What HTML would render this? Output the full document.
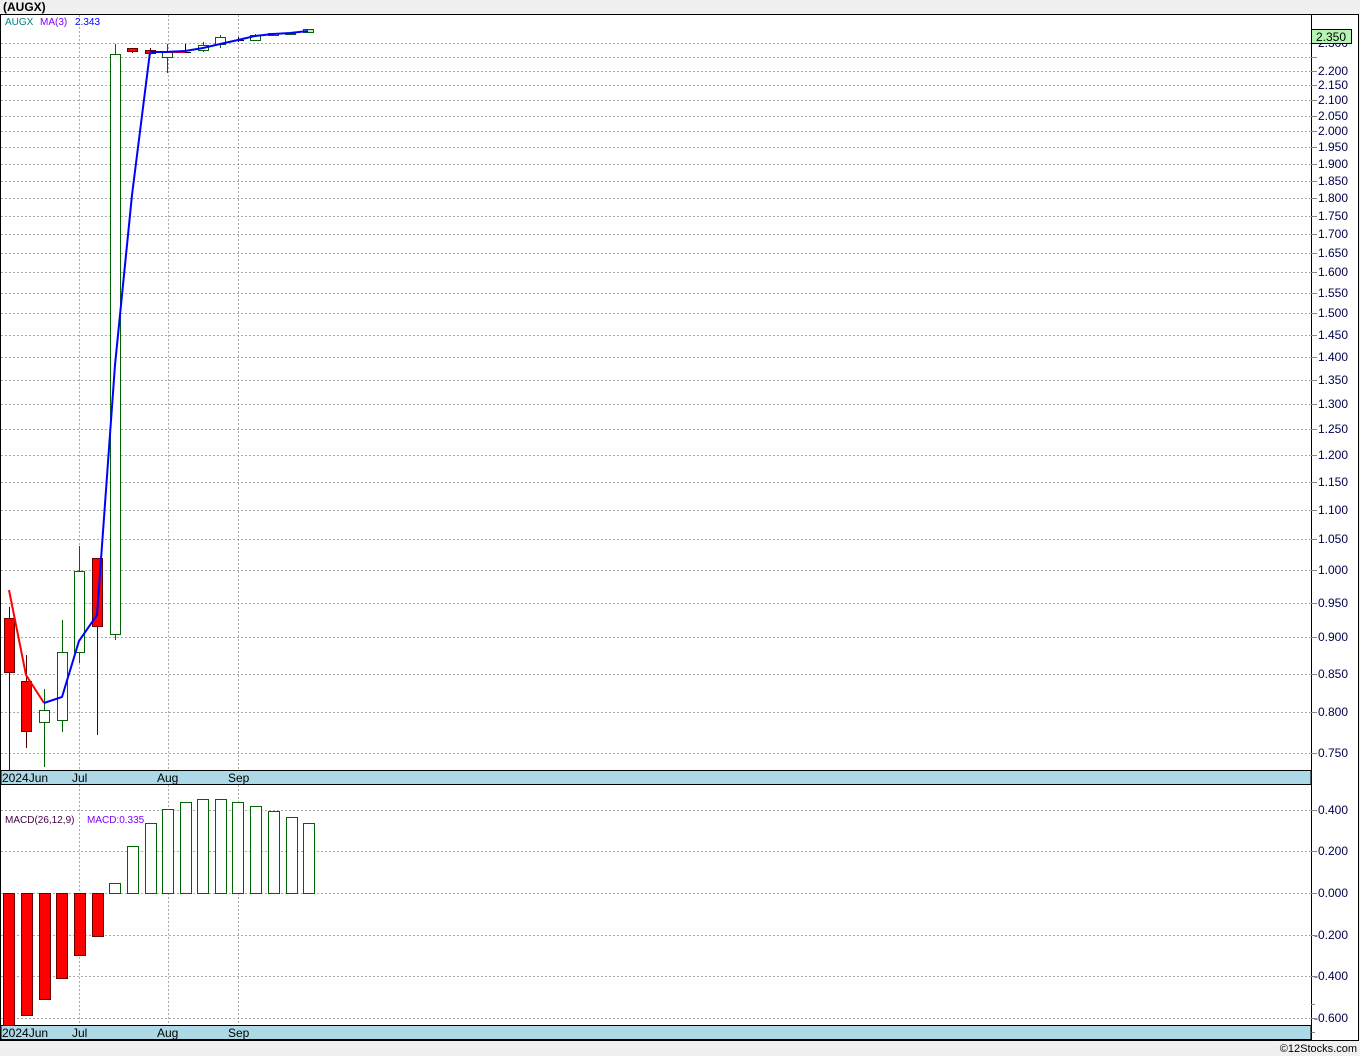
<!DOCTYPE html>
<html><head><meta charset="utf-8"><style>
html,body{margin:0;padding:0;background:#f0f0f0;width:1360px;height:1056px;overflow:hidden}
svg{display:block;font-family:"Liberation Sans",Tahoma,sans-serif}
</style></head><body>
<svg width="1360" height="1056" xmlns="http://www.w3.org/2000/svg">
<text x="3" y="11" font-size="12" font-weight="bold" fill="#000">(AUGX)</text>
<rect x="0.5" y="14.5" width="1358" height="1026" fill="#fff" stroke="#000"/>
<line x1="1311.5" y1="14" x2="1311.5" y2="1040" stroke="#000"/>
<g stroke="#aaa" stroke-dasharray="2,2" stroke-width="1">
<line x1="1" x2="1311" y1="753.5" y2="753.5"/><line x1="1" x2="1311" y1="712.5" y2="712.5"/><line x1="1" x2="1311" y1="674.5" y2="674.5"/><line x1="1" x2="1311" y1="637.5" y2="637.5"/><line x1="1" x2="1311" y1="603.5" y2="603.5"/><line x1="1" x2="1311" y1="570.5" y2="570.5"/><line x1="1" x2="1311" y1="539.5" y2="539.5"/><line x1="1" x2="1311" y1="510.5" y2="510.5"/><line x1="1" x2="1311" y1="482.5" y2="482.5"/><line x1="1" x2="1311" y1="455.5" y2="455.5"/><line x1="1" x2="1311" y1="429.5" y2="429.5"/><line x1="1" x2="1311" y1="404.5" y2="404.5"/><line x1="1" x2="1311" y1="380.5" y2="380.5"/><line x1="1" x2="1311" y1="357.5" y2="357.5"/><line x1="1" x2="1311" y1="335.5" y2="335.5"/><line x1="1" x2="1311" y1="313.5" y2="313.5"/><line x1="1" x2="1311" y1="293.5" y2="293.5"/><line x1="1" x2="1311" y1="272.5" y2="272.5"/><line x1="1" x2="1311" y1="253.5" y2="253.5"/><line x1="1" x2="1311" y1="234.5" y2="234.5"/><line x1="1" x2="1311" y1="216.5" y2="216.5"/><line x1="1" x2="1311" y1="198.5" y2="198.5"/><line x1="1" x2="1311" y1="181.5" y2="181.5"/><line x1="1" x2="1311" y1="164.5" y2="164.5"/><line x1="1" x2="1311" y1="147.5" y2="147.5"/><line x1="1" x2="1311" y1="131.5" y2="131.5"/><line x1="1" x2="1311" y1="116.5" y2="116.5"/><line x1="1" x2="1311" y1="100.5" y2="100.5"/><line x1="1" x2="1311" y1="85.5" y2="85.5"/><line x1="1" x2="1311" y1="71.5" y2="71.5"/><line x1="1" x2="1311" y1="57.5" y2="57.5"/><line x1="1" x2="1311" y1="43.5" y2="43.5"/>
<line x1="79.5" x2="79.5" y1="15" y2="770"/><line x1="168.5" x2="168.5" y1="15" y2="770"/><line x1="238.5" x2="238.5" y1="15" y2="770"/>
<line x1="1" x2="1311" y1="810.5" y2="810.5"/><line x1="1" x2="1311" y1="851.5" y2="851.5"/><line x1="1" x2="1311" y1="893.5" y2="893.5"/><line x1="1" x2="1311" y1="935.5" y2="935.5"/><line x1="1" x2="1311" y1="976.5" y2="976.5"/><line x1="1" x2="1311" y1="1018.5" y2="1018.5"/>
<line x1="79.5" x2="79.5" y1="785" y2="1025"/><line x1="168.5" x2="168.5" y1="785" y2="1025"/><line x1="238.5" x2="238.5" y1="785" y2="1025"/>
</g>
<g stroke="#888"><path d="M1311 753.5h6M1311 712.5h6M1311 674.5h6M1311 637.5h6M1311 603.5h6M1311 570.5h6M1311 539.5h6M1311 510.5h6M1311 482.5h6M1311 455.5h6M1311 429.5h6M1311 404.5h6M1311 380.5h6M1311 357.5h6M1311 335.5h6M1311 313.5h6M1311 293.5h6M1311 272.5h6M1311 253.5h6M1311 234.5h6M1311 216.5h6M1311 198.5h6M1311 181.5h6M1311 164.5h6M1311 147.5h6M1311 131.5h6M1311 116.5h6M1311 100.5h6M1311 85.5h6M1311 71.5h6M1311 57.5h6M1311 810.5h6M1311 851.5h6M1311 893.5h6M1311 935.5h4M1311 976.5h4M1311 1018.5h4M1311 1004.5h4M1311 1032.5h4"/></g>
<g font-size="12" fill="#00004a">
<text x="1318" y="757">0.750</text><text x="1318" y="716">0.800</text><text x="1318" y="678">0.850</text><text x="1318" y="641">0.900</text><text x="1318" y="607">0.950</text><text x="1318" y="574">1.000</text><text x="1318" y="543">1.050</text><text x="1318" y="514">1.100</text><text x="1318" y="486">1.150</text><text x="1318" y="459">1.200</text><text x="1318" y="433">1.250</text><text x="1318" y="408">1.300</text><text x="1318" y="384">1.350</text><text x="1318" y="361">1.400</text><text x="1318" y="339">1.450</text><text x="1318" y="317">1.500</text><text x="1318" y="297">1.550</text><text x="1318" y="276">1.600</text><text x="1318" y="257">1.650</text><text x="1318" y="238">1.700</text><text x="1318" y="220">1.750</text><text x="1318" y="202">1.800</text><text x="1318" y="185">1.850</text><text x="1318" y="168">1.900</text><text x="1318" y="151">1.950</text><text x="1318" y="135">2.000</text><text x="1318" y="120">2.050</text><text x="1318" y="104">2.100</text><text x="1318" y="89">2.150</text><text x="1318" y="75">2.200</text><text x="1318" y="47">2.300</text>
<text x="1318" y="814">0.400</text><text x="1318" y="855">0.200</text><text x="1318" y="897">0.000</text><text x="1314" y="939">-0.200</text><text x="1314" y="980">-0.400</text><text x="1314" y="1022">-0.600</text>
</g>
<rect x="1311.5" y="29.5" width="40" height="14" fill="#b4f5b4" stroke="#000"/>
<text x="1316" y="41" font-size="12" fill="#000">2.350</text>
<rect x="1" y="770.5" width="1310" height="14" fill="#add8e6" stroke="#000"/>
<rect x="1" y="1025.5" width="1310" height="14" fill="#add8e6" stroke="#000"/>
<g font-size="12" fill="#000"><text x="2" y="782">2024Jun</text><text x="72" y="782">Jul</text><text x="157" y="782">Aug</text><text x="228" y="782">Sep</text>
<text x="2" y="1037">2024Jun</text><text x="72" y="1037">Jul</text><text x="157" y="1037">Aug</text><text x="228" y="1037">Sep</text></g>
<g font-size="10"><text x="5" y="25" fill="#008080">AUGX</text><text x="40" y="25" fill="#8000ff">MA(3)</text><text x="75" y="25" fill="#0000ff">2.343</text>
<text x="5" y="823" fill="#400040">MACD(26,12,9)</text><text x="87" y="823" fill="#8000ff">MACD:0.335</text></g>
<g stroke-width="1">
<g stroke="#4a0000"><line x1="9.5" x2="9.5" y1="607" y2="770"/><line x1="26.5" x2="26.5" y1="655" y2="748"/><line x1="97.5" x2="97.5" y1="626" y2="735"/><line x1="150.5" x2="150.5" y1="48" y2="55"/><line x1="132.5" x2="132.5" y1="48" y2="53"/></g>
<g stroke="#006400"><line x1="44.5" x2="44.5" y1="689" y2="767"/><line x1="62.5" x2="62.5" y1="620" y2="732"/><line x1="79.5" x2="79.5" y1="546" y2="663"/><line x1="115.5" x2="115.5" y1="44" y2="640"/><line x1="167.5" x2="167.5" y1="44" y2="73"/><line x1="203.5" x2="203.5" y1="42" y2="52"/><line x1="220.5" x2="220.5" y1="35" y2="48"/><line x1="255.5" x2="255.5" y1="34" y2="41"/></g>
<g stroke="#000"><line x1="185.5" x2="185.5" y1="44" y2="52"/><line x1="180" x2="191" y1="52.5" y2="52.5"/><line x1="238.5" x2="238.5" y1="37" y2="42"/><line x1="233" x2="244" y1="40.5" y2="40.5"/></g>
<g fill="#f00" stroke="#6b0000"><rect x="4.5" y="618.5" width="10" height="54"/><rect x="21.5" y="681.5" width="10" height="50"/><rect x="92.5" y="558.5" width="10" height="68"/><rect x="127.5" y="48.5" width="10" height="3"/><rect x="145.5" y="50.5" width="10" height="3"/></g>
<g fill="#fff" stroke="#006400"><rect x="39.5" y="710.5" width="10" height="12"/><rect x="57.5" y="652.5" width="10" height="68"/><rect x="74.5" y="571.5" width="10" height="81"/><rect x="110.5" y="54.5" width="10" height="580"/><rect x="162.5" y="52.5" width="10" height="5"/><rect x="198.5" y="45.5" width="10" height="5"/><rect x="215.5" y="37.5" width="10" height="7"/><rect x="250.5" y="35.5" width="10" height="5"/><rect x="268.5" y="33.5" width="10" height="2"/><rect x="285.5" y="33.5" width="10" height="1"/><rect x="303.5" y="29.5" width="10" height="3" fill="#b4f5b4"/></g>
</g>
<polyline points="9,590 26,675 44,703" fill="none" stroke="#f00" stroke-width="2"/>
<polyline points="44,703 62,697 79,641 97,615 115,365 132,195 150,52" fill="none" stroke="#00f" stroke-width="2"/>
<polyline points="150,52 185,52" fill="none" stroke="#f00" stroke-width="2"/>
<polyline points="150,52 165,52 185,51 203,48 220,44 238,40 255,36 273,34 290,33 308,31" fill="none" stroke="#00f" stroke-width="2"/>
<g fill="#f00" stroke="#6b0000"><rect x="3.5" y="893.5" width="11" height="132"/><rect x="21.5" y="893.5" width="11" height="122"/><rect x="39.5" y="893.5" width="11" height="106"/><rect x="56.5" y="893.5" width="11" height="85"/><rect x="74.5" y="893.5" width="11" height="62"/><rect x="92.5" y="893.5" width="11" height="43"/></g>
<g fill="#fff" stroke="#006400"><rect x="109.5" y="883.5" width="11" height="10"/><rect x="127.5" y="846.5" width="11" height="47"/><rect x="145.5" y="823.5" width="11" height="70"/><rect x="162.5" y="809.5" width="11" height="84"/><rect x="180.5" y="802.5" width="11" height="91"/><rect x="197.5" y="799.5" width="11" height="94"/><rect x="215.5" y="799.5" width="11" height="94"/><rect x="232.5" y="802.5" width="11" height="91"/><rect x="250.5" y="806.5" width="11" height="87"/><rect x="268.5" y="811.5" width="11" height="82"/><rect x="286.5" y="817.5" width="11" height="76"/><rect x="303.5" y="823.5" width="11" height="70"/></g>
<text x="1357" y="1052" font-size="11" fill="#000" text-anchor="end">©12Stocks.com</text>
</svg>
</body></html>
